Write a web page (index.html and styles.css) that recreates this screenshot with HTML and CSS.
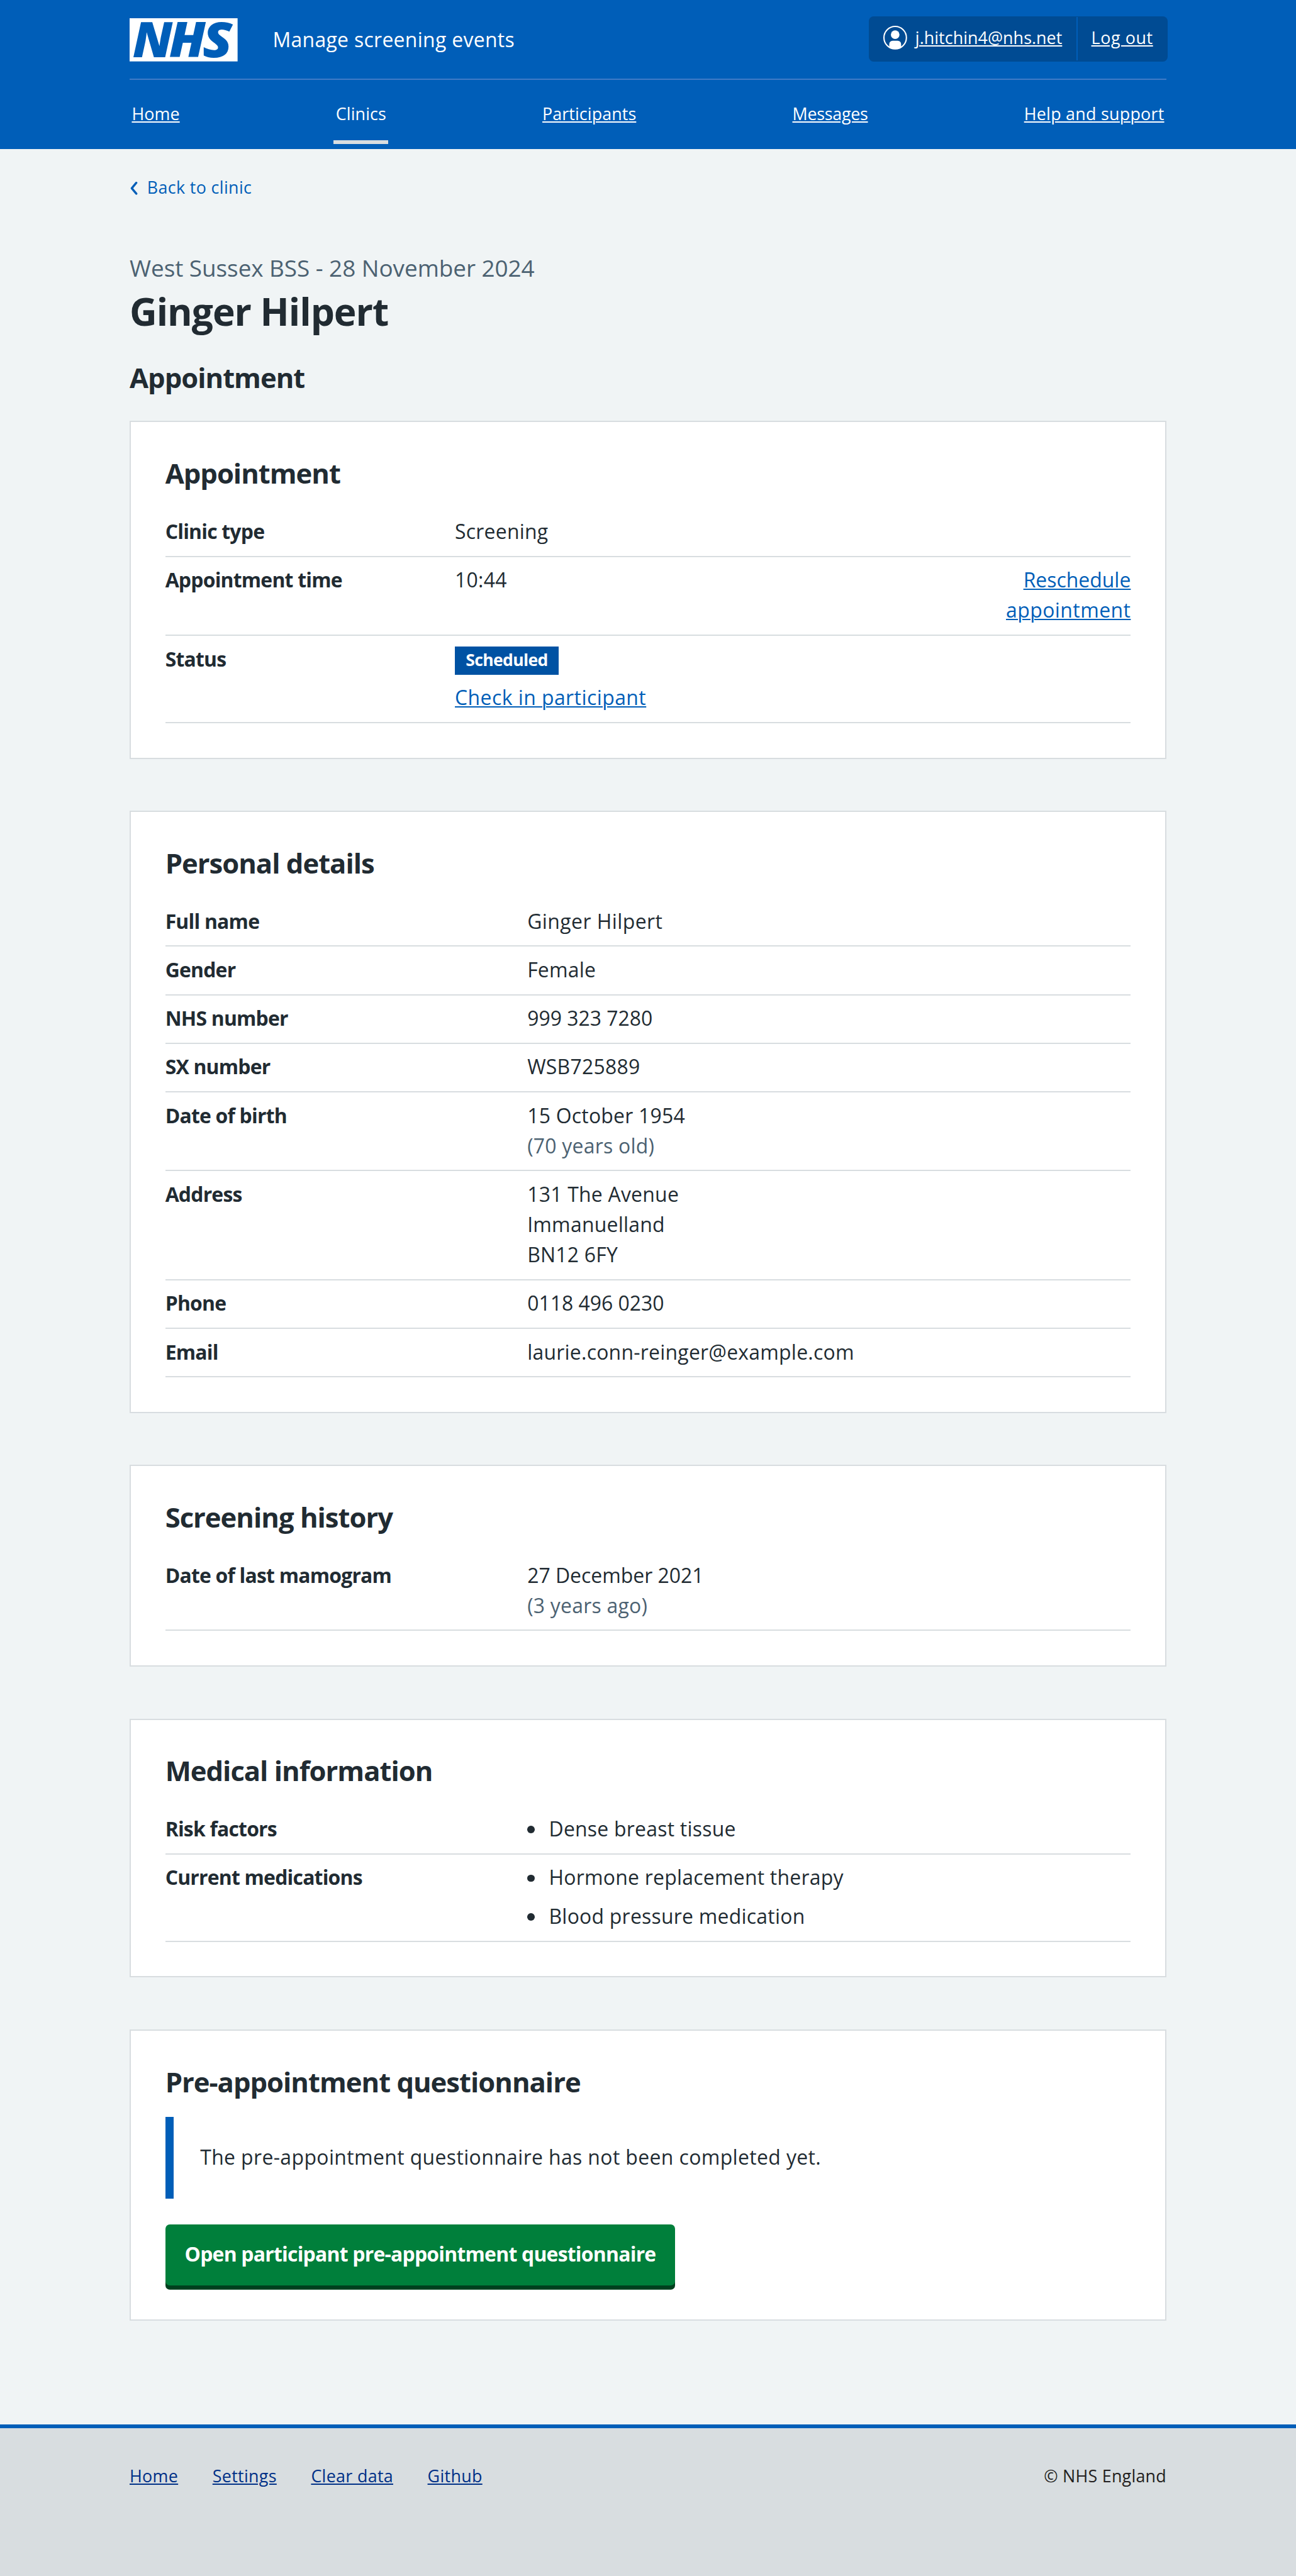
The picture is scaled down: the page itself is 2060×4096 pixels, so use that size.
FILE: index.html
```html
<!DOCTYPE html>
<html lang="en">
<head>
<meta charset="utf-8">
<title>Ginger Hilpert - Manage screening events</title>
<link rel="stylesheet" href="styles.css">
</head>
<body>
<header class="header">
  <div class="container">
    <div class="header-top">
      <svg class="logo" viewBox="0 0 100 40" role="img" aria-label="NHS">
        <rect width="100" height="40" fill="#fff"/>
        <g class="logo-text">
          <text x="2.8" y="36.2" textLength="37" lengthAdjust="spacingAndGlyphs">N</text>
          <text x="36.5" y="36.2" textLength="33.8" lengthAdjust="spacingAndGlyphs">H</text>
          <text x="67.6" y="36.2" textLength="27.6" lengthAdjust="spacingAndGlyphs">S</text>
        </g>
      </svg>
      <span class="service">Manage screening events</span>
      <div class="account">
        <div class="account-item">
          <svg class="user-icon" viewBox="0 0 22 22" aria-hidden="true">
            <clipPath id="ring"><circle cx="11" cy="11" r="10.6"/></clipPath>
            <circle cx="11" cy="8.2" r="4" fill="#fff"/>
            <path d="M5.5 22V17a3.2 3.2 0 0 1 3.2-3.2h4.6a3.2 3.2 0 0 1 3.2 3.2v5z" fill="#fff" clip-path="url(#ring)"/>
            <circle cx="11" cy="11" r="10.4" fill="none" stroke="#fff" stroke-width="1.2"/>
          </svg>
          <a href="#">j.hitchin4@nhs.net</a>
        </div>
        <div class="account-item account-logout"><a href="#">Log out</a></div>
      </div>
    </div>
    <ul class="nav">
      <li><a href="#">Home</a></li>
      <li class="current"><a href="#">Clinics</a></li>
      <li><a href="#">Participants</a></li>
      <li class="tight"><a href="#">Messages</a></li>
      <li class="wide"><a href="#">Help and support</a></li>
    </ul>
  </div>
</header>

<main class="container main">
  <a class="back" href="#">
    <svg class="chevron" viewBox="0 0 8 12" aria-hidden="true"><path d="M6.2 1 2 6l4.2 5" fill="none" stroke="#005eb8" stroke-width="2" stroke-linecap="round" stroke-linejoin="round"/></svg>
    Back to clinic
  </a>
  <p class="caption">West Sussex BSS - 28 November 2024</p>
  <h1>Ginger Hilpert</h1>
  <h2>Appointment</h2>

  <section class="card">
    <h2>Appointment</h2>
    <dl class="summary with-actions">
      <div class="row"><dt>Clinic type</dt><dd>Screening</dd></div>
      <div class="row"><dt>Appointment time</dt><dd>10:44</dd><dd class="action"><a href="#">Reschedule <span class="wide">appointment</span></a></dd></div>
      <div class="row"><dt>Status</dt><dd class="status"><strong class="tag">Scheduled</strong><a class="wide" href="#">Check in participant</a></dd></div>
    </dl>
  </section>

  <section class="card">
    <h2>Personal details</h2>
    <dl class="summary">
      <div class="row"><dt>Full name</dt><dd class="wide">Ginger Hilpert</dd></div>
      <div class="row"><dt>Gender</dt><dd>Female</dd></div>
      <div class="row"><dt>NHS number</dt><dd class="digits">999 323 7280</dd></div>
      <div class="row"><dt>SX number</dt><dd>WSB725889</dd></div>
      <div class="row"><dt>Date of birth</dt><dd>15 October 1954<br><span class="hint">(70 years old)</span></dd></div>
      <div class="row"><dt>Address</dt><dd>131 The Avenue<br>Immanuelland<br>BN12 6FY</dd></div>
      <div class="row"><dt>Phone</dt><dd class="digits">0118 496 0230</dd></div>
      <div class="row"><dt>Email</dt><dd>laurie.conn-reinger@example.com</dd></div>
    </dl>
  </section>

  <section class="card">
    <h2>Screening history</h2>
    <dl class="summary">
      <div class="row"><dt>Date of last mamogram</dt><dd><span class="digits">27 December 2021</span><br><span class="hint">(3 years ago)</span></dd></div>
    </dl>
  </section>

  <section class="card">
    <h2>Medical information</h2>
    <dl class="summary">
      <div class="row"><dt>Risk factors</dt><dd><ul class="list"><li>Dense breast tissue</li></ul></dd></div>
      <div class="row"><dt>Current medications</dt><dd><ul class="list"><li>Hormone replacement therapy</li><li>Blood pressure medication</li></ul></dd></div>
    </dl>
  </section>

  <section class="card">
    <h2>Pre-appointment questionnaire</h2>
    <p class="inset">The pre-appointment questionnaire has not been completed yet.</p>
    <a class="button" href="#">Open participant pre-appointment questionnaire</a>
  </section>
</main>

<footer class="footer">
  <div class="container footer-row">
    <ul class="footer-links">
      <li><a href="#">Home</a></li>
      <li><a href="#">Settings</a></li>
      <li><a href="#">Clear data</a></li>
      <li><a href="#">Github</a></li>
    </ul>
    <p>© NHS England</p>
  </div>
</footer>
</body>
</html>
```
FILE: styles.css
```css
/* 1rem is ten layout units; the layout is 120rem wide */
html { font-size: 17.16667px; background: #d8dde0; }
*, *::before { box-sizing: border-box; }
body {
  margin: 0;
  background: #f0f4f5;
  color: #212b32;
  font-family: "Open Sans", "Noto Sans", sans-serif;
  font-size: 1.86rem;
  line-height: 2.8rem;
  letter-spacing: 0.014rem;
}
h1, h2, p, ul, dl, dd { margin: 0; padding: 0; }
ul { list-style: none; }
a {
  color: #005eb8;
  text-decoration-thickness: 2px;
  text-underline-offset: 2px;
}
.container { width: 96rem; margin: 0 auto; }
.wide { letter-spacing: 0.026rem; }
.digits { letter-spacing: 0; }

/* Header */
.header { height: 13.8rem; background: #005eb8; color: #fff; }
.header a { color: #fff; }
.header-top {
  display: flex;
  align-items: flex-start;
  height: 7.4rem;
  padding-top: 1.5rem;
  border-bottom: 2px solid #407bc6;
}
.logo { display: block; width: 10rem; height: 4rem; margin-top: 0.2rem; overflow: visible; }
.logo-text {
  fill: #005eb8;
  font: italic 800 45.5px "Open Sans", sans-serif;
  letter-spacing: 0;
}
.service { margin: 0.76rem 0 0 3.25rem; letter-spacing: 0.018rem; }
.account {
  display: flex;
  width: 27.65rem;
  height: 4.2rem;
  margin: 0 -0.1rem 0 auto;
  padding: 0.1rem;
  border-radius: 0.45rem;
  background: #004b93;
  font-size: 1.565rem;
  letter-spacing: 0.003rem;
}
.account-item { display: flex; align-items: center; padding: 0 1.24rem 0.2rem; }
.account-item:first-child { flex: 1; }
.account-logout { border-left: 2px solid #005eb8; letter-spacing: 0.035rem; }
.user-icon { width: 2.2rem; height: 2.2rem; margin-right: 0.76rem; overflow: visible; }

.nav {
  display: flex;
  justify-content: space-between;
  font-size: 1.565rem;
  line-height: 2.4rem;
  letter-spacing: 0.005rem;
}
.nav li { padding: 1.92rem 0.2rem 1.28rem; border-bottom: 0.4rem solid transparent; }
.nav .current { border-color: #d8dde0; }
.nav .current a { text-decoration: none; }
.nav .tight { letter-spacing: -0.016rem; }
.nav .wide { letter-spacing: 0.015rem; }

/* Page heading */
.main { padding: 2.35rem 0 9.6rem; }
.back {
  display: flex;
  align-items: center;
  gap: 0.82rem;
  width: max-content;
  font-size: 1.565rem;
  line-height: 2.4rem;
  letter-spacing: 0.021rem;
  text-decoration: none;
}
.chevron { width: 0.8rem; height: 1.2rem; margin-top: 0.2rem; }
.caption {
  margin-top: 4.69rem;
  color: #4c6272;
  font-size: 2.15rem;
  line-height: 3.2rem;
  letter-spacing: -0.003rem;
}
h1 {
  margin-top: 0.16rem;
  font-size: 3.52rem;
  line-height: 4.4rem;
  font-weight: 700;
  letter-spacing: -0.017em;
}
h2 {
  font-size: 2.54rem;
  line-height: 3.2rem;
  font-weight: 700;
  letter-spacing: -0.023em;
}
h1 + h2 { margin: 2.36rem 0 2.44rem; }

/* Cards */
.card {
  padding: calc(3.26rem - 2px) calc(3.3rem - 2px) calc(3.3rem - 2px);
  border: 2px solid #d8dde0;
  background: #fff;
}
.card + .card { margin-top: 4.8rem; }
.card h2 { margin-bottom: 1.64rem; }

.row {
  display: flex;
  padding: 0.74rem 0 calc(0.96rem - 2px);
  border-bottom: 2px solid #d8dde0;
}
dt { width: 37.5%; flex: none; font-weight: 700; letter-spacing: -0.025em; }
dd { flex: 1; }
.with-actions dt { width: 30%; }
.action { flex: none; width: 14rem; text-align: right; letter-spacing: 0; }
.hint { color: #4c6272; }
.status { display: flex; flex-direction: column; align-items: flex-start; gap: 0.68rem; }
.tag {
  height: 2.6rem;
  margin: 0.26rem 0 0.06rem;
  padding: 0 1rem;
  background: #0052a3;
  color: #fff;
  font-size: 1.55rem;
  line-height: 2.5rem;
  letter-spacing: -0.025em;
}
.list { display: flex; flex-direction: column; gap: 0.8rem; }
.list li { display: flex; align-items: center; gap: 1.32rem; }
.list li::before {
  content: "";
  width: 0.68rem;
  height: 0.68rem;
  margin-top: 0.12rem;
  border-radius: 50%;
  background: #212b32;
}

.inset {
  padding: 2.35rem 2.4rem 2.45rem 2.48rem;
  border-left: 0.8rem solid #005eb8;
  letter-spacing: 0.022rem;
}
.button {
  display: block;
  width: max-content;
  margin-top: 2.4rem;
  padding: 1.34rem 1.8rem 1.46rem;
  border-radius: 0.4rem;
  background: #007f3b;
  box-shadow: 0 0.4rem 0 #00401e;
  color: #fff;
  font-weight: 700;
  letter-spacing: -0.0245em;
  text-decoration: none;
}

/* Footer */
.footer {
  height: 14rem;
  padding-top: 3.18rem;
  border-top: 0.4rem solid #005eb8;
  background: #d8dde0;
  color: #231f20;
  font-size: 1.565rem;
  line-height: 2.4rem;
}
.footer-row, .footer-links { display: flex; justify-content: space-between; }
.footer-links { gap: 3.18rem; letter-spacing: 0.018rem; }
.footer a { color: #003087; }
```
